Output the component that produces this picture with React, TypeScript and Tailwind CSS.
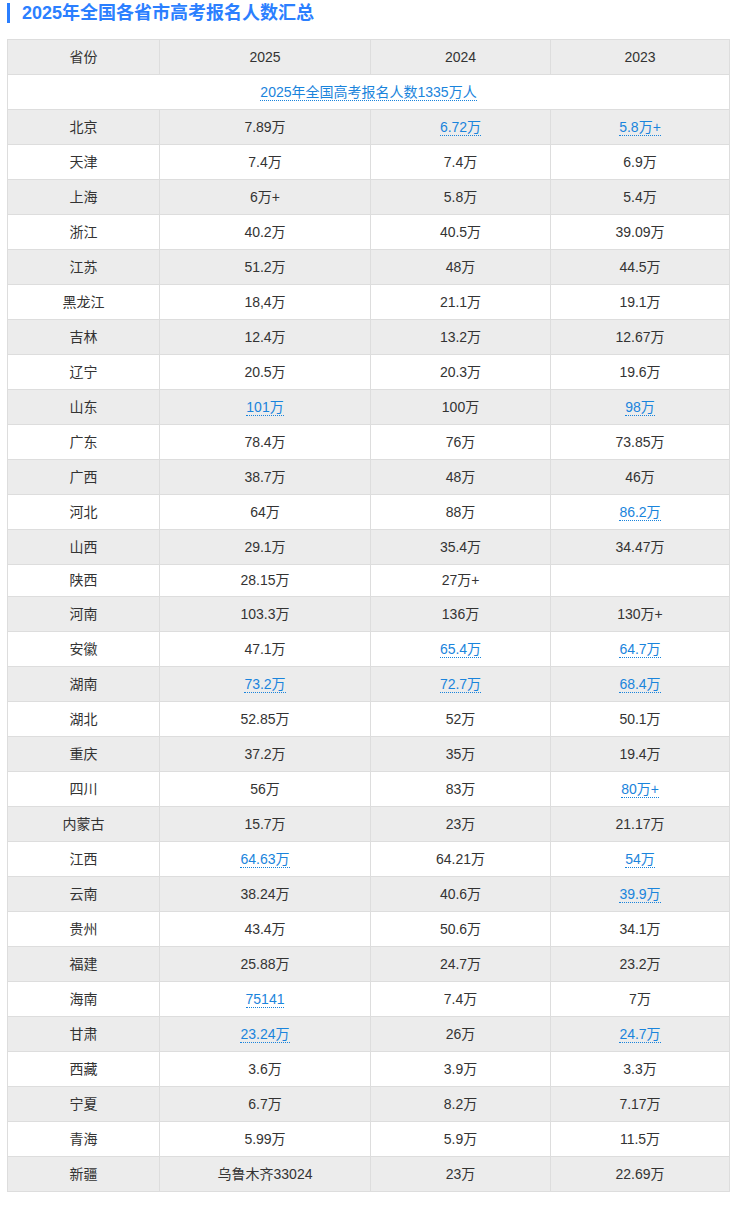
import React from "react";

type Cell = string | { link: string } | null;

const rows: [string, Cell, Cell, Cell][] = [
  ["北京", "7.89万", { link: "6.72万" }, { link: "5.8万+" }],
  ["天津", "7.4万", "7.4万", "6.9万"],
  ["上海", "6万+", "5.8万", "5.4万"],
  ["浙江", "40.2万", "40.5万", "39.09万"],
  ["江苏", "51.2万", "48万", "44.5万"],
  ["黑龙江", "18,4万", "21.1万", "19.1万"],
  ["吉林", "12.4万", "13.2万", "12.67万"],
  ["辽宁", "20.5万", "20.3万", "19.6万"],
  ["山东", { link: "101万" }, "100万", { link: "98万" }],
  ["广东", "78.4万", "76万", "73.85万"],
  ["广西", "38.7万", "48万", "46万"],
  ["河北", "64万", "88万", { link: "86.2万" }],
  ["山西", "29.1万", "35.4万", "34.47万"],
  ["陕西", "28.15万", "27万+", null],
  ["河南", "103.3万", "136万", "130万+"],
  ["安徽", "47.1万", { link: "65.4万" }, { link: "64.7万" }],
  ["湖南", { link: "73.2万" }, { link: "72.7万" }, { link: "68.4万" }],
  ["湖北", "52.85万", "52万", "50.1万"],
  ["重庆", "37.2万", "35万", "19.4万"],
  ["四川", "56万", "83万", { link: "80万+" }],
  ["内蒙古", "15.7万", "23万", "21.17万"],
  ["江西", { link: "64.63万" }, "64.21万", { link: "54万" }],
  ["云南", "38.24万", "40.6万", { link: "39.9万" }],
  ["贵州", "43.4万", "50.6万", "34.1万"],
  ["福建", "25.88万", "24.7万", "23.2万"],
  ["海南", { link: "75141" }, "7.4万", "7万"],
  ["甘肃", { link: "23.24万" }, "26万", { link: "24.7万" }],
  ["西藏", "3.6万", "3.9万", "3.3万"],
  ["宁夏", "6.7万", "8.2万", "7.17万"],
  ["青海", "5.99万", "5.9万", "11.5万"],
  ["新疆", "乌鲁木齐33024", "23万", "22.69万"],
];

function Link({ children }: { children: React.ReactNode }) {
  return (
    <a className="text-[#1a84dc] border-b border-dotted border-[#1a84dc] leading-[16px] inline-block">
      {children}
    </a>
  );
}

function renderCell(c: Cell) {
  if (c === null) return null;
  if (typeof c === "string") return c;
  return <Link>{c.link}</Link>;
}

export default function App() {
  return (
    <div
      className="bg-white text-[#333] pb-[21px]"
      style={{ fontFamily: '"Liberation Sans", Arial, "Noto Sans CJK SC", sans-serif' }}
    >
      <div className="pt-[3px]">
        <div className="ml-[7px] h-[20px] border-l-[3px] border-[#2b7fff] pl-[12px] flex items-center">
          <h2 className="text-[18px] leading-[20px] font-bold text-[#2b7fff]">
            2025年全国各省市高考报名人数汇总
          </h2>
        </div>
      </div>
      <table className="mt-[16px] ml-[7px] w-[722px] table-fixed border-collapse text-[14px] text-center">
        <colgroup>
          <col className="w-[152px]" />
          <col className="w-[211px]" />
          <col className="w-[180px]" />
          <col className="w-[179px]" />
        </colgroup>
        <tbody>
          <tr className="bg-[#ececec]">
            {["省份", "2025", "2024", "2023"].map((h) => (
              <td key={h} className="h-[35px] p-0 border border-[#dddddd] font-normal">
                {h}
              </td>
            ))}
          </tr>
          <tr className="bg-white">
            <td colSpan={4} className="h-[35px] p-0 border border-[#dddddd]">
              <Link>2025年全国高考报名人数1335万人</Link>
            </td>
          </tr>
          {rows.map((r, i) => (
            <tr key={r[0]} className={i % 2 === 0 ? "bg-[#ececec]" : "bg-white"}>
              <td className={`${r[3] === null ? "h-[32px]" : "h-[35px]"} p-0 border border-[#dddddd]`}>
                {r[0]}
              </td>
              <td className="p-0 border border-[#dddddd]">{renderCell(r[1])}</td>
              <td className="p-0 border border-[#dddddd]">{renderCell(r[2])}</td>
              <td className="p-0 border border-[#dddddd]">{renderCell(r[3])}</td>
            </tr>
          ))}
        </tbody>
      </table>
    </div>
  );
}
